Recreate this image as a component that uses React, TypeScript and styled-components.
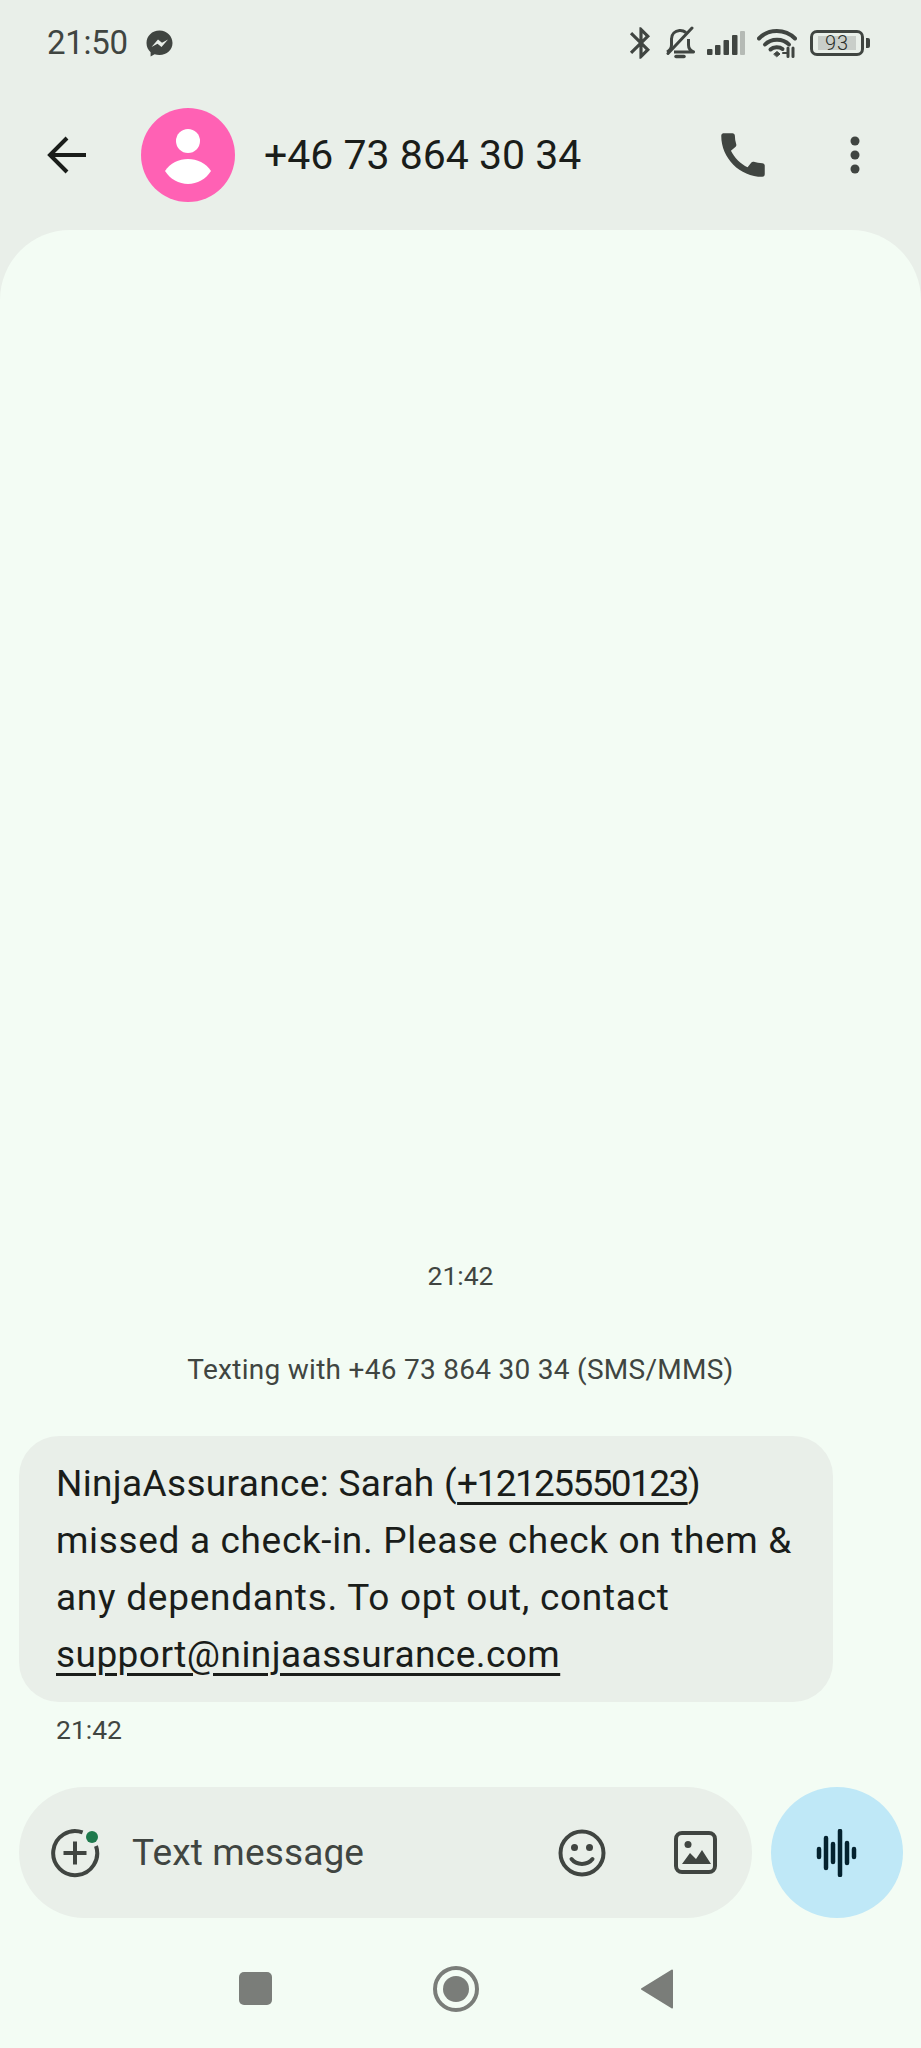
import React from "react";
import styled, { createGlobalStyle } from "styled-components";

const Global = createGlobalStyle`
  html, body { margin: 0; padding: 0; background: #f3fcf4; }
  * { box-sizing: border-box; }
`;

const Screen = styled.div`
  width: 921px;
  height: 2048px;
  display: flex;
  flex-direction: column;
  overflow: hidden;
  background: #e9efe9;
  font-family: Roboto, "Noto Sans", sans-serif;
  color: #1a1d1a;
`;

const StatusBar = styled.div`
  height: 86px;
  flex: none;
  padding: 0 51px 0 47px;
  display: flex;
  align-items: center;
  justify-content: space-between;
  color: #404541;
`;

const StatusGroup = styled.div`
  display: flex;
  align-items: center;
  gap: 12px;
`;

const Clock = styled.span`
  font-size: 33px;
  line-height: 40px;
  letter-spacing: -0.3px;
  margin-right: 6px;
`;

const Battery = styled.div`
  display: flex;
  align-items: center;
  gap: 2px;
  margin-left: 1px;
`;

const BatteryBody = styled.div`
  width: 54px;
  height: 26px;
  border: 3px solid #404541;
  border-radius: 7px;
  padding: 3px 5px;
  display: flex;
`;

const BatteryFill = styled.div`
  flex: 1;
  background: #c9cec9;
  font-size: 20px;
  font-weight: 300;
  line-height: 14px;
  letter-spacing: 1px;
  text-align: center;
  color: #2a2e2b;
`;

const BatteryNub = styled.div`
  width: 4px;
  height: 10px;
  background: #404541;
  border-radius: 0 2px 2px 0;
`;

const Header = styled.header`
  height: 144px;
  flex: none;
  padding: 0 0 6px 47px;
  display: flex;
  align-items: center;
  color: #404541;
`;

const Avatar = styled.div`
  width: 94px;
  height: 94px;
  border-radius: 50%;
  background: #ff61b4;
  margin-left: 54px;
  padding-top: 3px;
  flex: none;
  display: flex;
  align-items: center;
  justify-content: center;
`;

const Title = styled.h1`
  margin: 0 0 0 29px;
  font-size: 41px;
  font-weight: 400;
  line-height: 50px;
  color: #1a1d1a;
  flex: 1;
  white-space: nowrap;
`;

const HeaderActions = styled.div`
  display: flex;
  align-items: center;
  gap: 78px;
  margin-right: 61px;
`;

const Panel = styled.main`
  flex: 1;
  min-height: 0;
  background: #f3fcf4;
  border-radius: 70px 70px 0 0;
  display: flex;
  flex-direction: column;
  justify-content: flex-end;
`;

const Stamp = styled.div`
  font-size: 26.5px;
  line-height: 40px;
  text-align: center;
  color: #404541;
`;

const Notice = styled(Stamp)`
  margin-top: 54px;
  font-size: 28px;
  letter-spacing: 0.28px;
`;

const Bubble = styled.div`
  margin: 46px 0 0 19px;
  width: 814px;
  height: 266px;
  padding: 19px 37px;
  border-radius: 40px;
  background: #e9efe9;
  font-size: 37px;
  line-height: 57px;
  color: #1a1d1a;
`;

const BubbleLine = styled.div<{ $track: number }>`
  letter-spacing: ${(p) => p.$track}px;
  white-space: nowrap;
`;

const Link = styled.span<{ $track?: number }>`
  text-decoration: underline;
  text-decoration-thickness: 3px;
  text-underline-offset: 6px;
  ${(p) => (p.$track !== undefined ? `letter-spacing: ${p.$track}px;` : "")}
`;

const BubbleStamp = styled(Stamp)`
  margin: 8px 0 0 56px;
  text-align: left;
`;

const ComposerRow = styled.div`
  margin-top: 37px;
  padding: 0 18px 0 19px;
  display: flex;
  gap: 19px;
`;

const Composer = styled.div`
  flex: 1;
  height: 131px;
  border-radius: 66px;
  background: #e9efe9;
  padding: 0 34px 0 31px;
  display: flex;
  align-items: center;
  color: #404541;
`;

const AddButton = styled.div`
  position: relative;
  width: 50px;
  height: 50px;
  flex: none;
`;

const AddDot = styled.span`
  position: absolute;
  top: 3px;
  right: 2px;
  width: 12px;
  height: 12px;
  border-radius: 50%;
  background: #1f7a4d;
`;

const Placeholder = styled.span`
  flex: 1;
  margin-left: 32px;
  font-size: 37px;
  letter-spacing: 0.15px;
  color: #404541;
`;

const ComposerIcons = styled.div`
  display: flex;
  align-items: center;
  gap: 68px;
`;

const MicButton = styled.div`
  width: 132px;
  height: 131px;
  border-radius: 50%;
  background: #bfe8f7;
  display: flex;
  align-items: center;
  justify-content: center;
  flex: none;
`;

const NavBar = styled.nav`
  height: 130px;
  flex: none;
  padding: 54px 248px 0 239px;
  display: flex;
  justify-content: space-between;
  align-items: flex-start;
`;

const NavSquare = styled.div`
  width: 33px;
  height: 33px;
  border-radius: 5px;
  background: #7a7d79;
`;

const Icon = styled.svg`
  display: block;
  flex: none;
`;

const RaisedIcon = styled(Icon)<{ $lift: number }>`
  margin-top: -${(p) => p.$lift}px;
`;

const BluetoothIcon = styled(Icon)`
  margin-right: -7px;
`;

export default function App() {
  return (
    <Screen>
      <Global />
      <StatusBar>
        <StatusGroup>
          <Clock>21:50</Clock>
          <Icon width="27" height="27" viewBox="0 0 27 27">
            <path
              fill="#404541"
              d="M13.5 0.5C6 0.5 0.5 6 0.5 13c0 3.8 1.6 7 4.1 9.2V26.5l4-2.2c1.5.5 3.1.7 4.9.7 7.5 0 13-5.2 13-12S21 .5 13.5.5z"
            />
            <path fill="#e9efe9" d="M5.5 17l6.5-7.5 4 3.2 6-3.2-6.5 7.5-4-3.2z" />
          </Icon>
        </StatusGroup>
        <StatusGroup>
          <BluetoothIcon width="38" height="38" viewBox="0 0 24 24">
            <path
              fill="#404541"
              d="M17.71 7.71L12 2h-1v7.59L6.41 5 5 6.41 10.59 12 5 17.59 6.41 19 11 14.41V22h1l5.71-5.71-4.3-4.29 4.3-4.29zM13 5.83l1.88 1.88L13 9.59V5.83zm1.88 10.46L13 18.17v-3.76l1.88 1.88z"
            />
          </BluetoothIcon>
          <Icon width="30" height="34" viewBox="0 0 30 34" fill="none" stroke="#404541" strokeWidth="3">
            <path d="M2 26c3-1.5 4.5-3.5 4.5-7v-6c0-5 3.5-8 8-8.500 2.500-.2 4.500.5 6.500 2M23.500 13v6c0 3.500 1.500 5.500 5 7H9" strokeLinejoin="round" />
            <path d="M3 27.500L27 2" strokeLinecap="round" />
            <path d="M11 30.500h8" strokeWidth="3.500" strokeLinecap="round" />
          </Icon>
          <Icon width="38" height="25" viewBox="0 0 38 25">
            <rect x="0" y="18" width="5.500" height="6" rx="1" fill="#404541" />
            <rect x="8" y="14" width="5.500" height="10" rx="1" fill="#404541" />
            <rect x="16.500" y="9" width="5.500" height="15" rx="1" fill="#404541" />
            <rect x="25" y="4" width="5.500" height="20" rx="1" fill="#404541" />
            <rect x="33" y="0" width="5" height="24" rx="1" fill="#b5bab5" />
          </Icon>
          <Icon width="40" height="30" viewBox="0 0 40 30" fill="none" stroke="#404541" strokeWidth="4" strokeLinecap="round">
            <path d="M2 10.500C11.500 .5 28 .5 38 10.500" />
            <path d="M8 16.500C14 10 26 10 32 16.500" />
            <path d="M13.500 21.500C16.500 18.500 22.500 18.500 25.500 21" />
            <path d="M17 26l3-2.500 3 2.500-3 2.500z" fill="#404541" strokeWidth="1" />
            <path d="M31 20v8.500M36 20v8.500" strokeWidth="3" />
            <path d="M26 25h4" strokeWidth="2" />
          </Icon>
          <Battery>
            <BatteryBody>
              <BatteryFill>93</BatteryFill>
            </BatteryBody>
            <BatteryNub />
          </Battery>
        </StatusGroup>
      </StatusBar>

      <Header>
        <Icon width="40" height="38" viewBox="0 0 40 38" fill="none" stroke="#1a1d1a" strokeWidth="4">
          <path d="M39 19H3" />
          <path d="M20 2L3 19l17 17" />
        </Icon>
        <Avatar>
          <Icon width="46" height="55" viewBox="0 0 46 55" fill="#fff">
            <circle cx="23" cy="12" r="12" />
            <path d="M0 42C5 34 14 30 23 30S41 34 46 42C41 50 32 55 23 55S5 50 0 42z" />
          </Icon>
        </Avatar>
        <Title>+46 73 864 30 34</Title>
        <HeaderActions>
          <Icon width="58" height="58" viewBox="0 0 24 24">
            <path
              fill="#404541"
              d="M20.01 15.38c-1.230 0-2.420-.2-3.530-.56-.35-.12-.74-.03-1.010.24l-1.570 1.970c-2.830-1.350-5.480-3.900-6.890-6.830l1.950-1.660c.27-.28.35-.67.24-1.020-.37-1.110-.56-2.300-.56-3.530 0-.54-.45-.99-.99-.99H4.190C3.650 3 3 3.240 3 3.990 3 13.280 10.730 21 20.010 21c.71 0 .99-.63.99-1.180v-3.450c0-.54-.45-.99-.99-.99z"
            />
          </Icon>
          <Icon width="10" height="38" viewBox="0 0 10 38" fill="#404541">
            <circle cx="5" cy="5" r="4.500" />
            <circle cx="5" cy="19" r="4.500" />
            <circle cx="5" cy="33" r="4.500" />
          </Icon>
        </HeaderActions>
      </Header>

      <Panel>
        <Stamp>21:42</Stamp>
        <Notice>Texting with +46 73 864 30 34 (SMS/MMS)</Notice>
        <Bubble>
          <BubbleLine $track={0.34}>
            NinjaAssurance: Sarah (<Link $track={-1.6}>+12125550123</Link>)
          </BubbleLine>
          <BubbleLine $track={0.66}>missed a check-in. Please check on them &amp;</BubbleLine>
          <BubbleLine $track={0.74}>any dependants. To opt out, contact</BubbleLine>
          <BubbleLine $track={0.45}>
            <Link>support@ninjaassurance.com</Link>
          </BubbleLine>
        </Bubble>
        <BubbleStamp>21:42</BubbleStamp>
        <ComposerRow>
          <Composer>
            <AddButton>
              <Icon width="50" height="50" viewBox="0 0 50 50" fill="none" stroke="#404541" strokeWidth="4">
                <path d="M32.600 4.400A22 22 0 1 0 46 18" />
                <path d="M25 13.500v23M13.500 25h23" />
              </Icon>
              <AddDot />
            </AddButton>
            <Placeholder>Text message</Placeholder>
            <ComposerIcons>
              <Icon width="48" height="48" viewBox="0 0 48 48" fill="none" stroke="#404541" strokeWidth="4">
                <circle cx="24" cy="24" r="21.500" />
                <circle cx="16.500" cy="18.500" r="3.500" fill="#404541" stroke="none" />
                <circle cx="31.500" cy="18.500" r="3.500" fill="#404541" stroke="none" />
                <path d="M13.500 30c5 6.500 16 6.500 21 0" strokeLinecap="round" />
              </Icon>
              <Icon width="44" height="44" viewBox="0 0 44 44" fill="none">
                <rect x="2" y="2" width="39" height="39" rx="6" stroke="#404541" strokeWidth="4" />
                <circle cx="14" cy="13.500" r="3.500" fill="#404541" />
                <path d="M8 33l8-11 6 6 6-9 9 14z" fill="#404541" />
              </Icon>
            </ComposerIcons>
          </Composer>
          <MicButton>
            <Icon width="42" height="48" viewBox="0 0 42 48" stroke="#04222f" strokeWidth="4.500" strokeLinecap="round">
              <path d="M3 20v8M10 9v30M17 15v18M24 2v44M31 14v20M38 20v8" />
            </Icon>
          </MicButton>
        </ComposerRow>
        <NavBar>
          <NavSquare />
          <RaisedIcon $lift={6} width="46" height="46" viewBox="0 0 46 46" fill="none">
            <circle cx="23" cy="23" r="21" stroke="#7a7d79" strokeWidth="4" />
            <circle cx="23" cy="23" r="13" fill="#7a7d79" />
          </RaisedIcon>
          <RaisedIcon $lift={3} width="33" height="40" viewBox="0 0 33 40">
            <path d="M32 1.500L2 20l30 18.500z" fill="#7a7d79" stroke="#7a7d79" strokeWidth="2" strokeLinejoin="round" />
          </RaisedIcon>
        </NavBar>
      </Panel>
    </Screen>
  );
}
